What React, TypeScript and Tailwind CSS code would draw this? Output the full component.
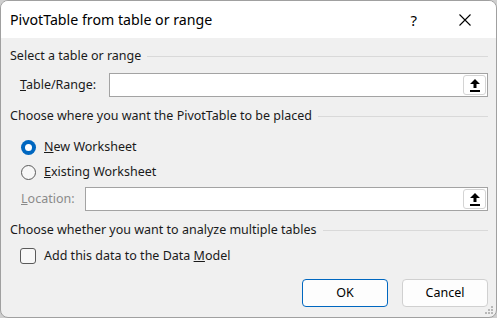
import React from 'react';

const UploadIcon = () => (
  <svg width="10" height="13" viewBox="0 0 10 13">
    <path d="M5 0 L10 5 L6.5 5 L6.5 9 L3.5 9 L3.5 5 L0 5 Z" fill="#000" />
    <rect x="0" y="11" width="10" height="2" fill="#000" />
  </svg>
);

const PickButton = () => (
  <div className="w-[23px] h-[20px] my-[1px] mr-[1px] bg-white border border-[#d4d4d4] rounded-[3px] flex items-center justify-center">
    <UploadIcon />
  </div>
);

const GroupHeader = ({ text }: { text: string }) => (
  <div className="flex items-center gap-[6px] pl-[9px] pr-[8px] h-[16px]">
    <span className="whitespace-nowrap">{text}</span>
    <div className="flex-1 h-px bg-[#d9d9d9]" />
  </div>
);

export default function App() {
  return (
    <div className="w-[497px] h-[318px] bg-[#cfcfcf] text-[12.5px] leading-[16px] text-[#1a1a1a]" style={{ fontFamily: '"Noto Sans", sans-serif' }}>
      <div className="relative w-[497px] h-[318px] rounded-[8px] border border-[#a0a0a0] bg-[#f0f0f0] overflow-hidden flex flex-col">
        {/* Title bar */}
        <div className="h-[37px] bg-white flex items-center shrink-0">
          <span className="pl-[9px] text-[14.2px] text-black">PivotTable from table or range</span>
          <span className="ml-auto mr-[42px] text-[15px] text-black">?</span>
          <svg className="mr-[25px]" width="12" height="12" viewBox="0 0 12 12">
            <path d="M0.5 0.5 L11.5 11.5 M11.5 0.5 L0.5 11.5" stroke="#000" strokeWidth="1.1" />
          </svg>
        </div>

        <div className="flex flex-col pt-[10px]">
          <GroupHeader text="Select a table or range" />
          <div className="flex items-center pl-[19px] pr-[8px] mt-[9px]">
            <span className="w-[89px]"><u>T</u>able/Range:</span>
            <div className="flex-1 h-[24px] bg-white border border-[#a3a3a3] flex justify-end">
              <PickButton />
            </div>
          </div>

          <div className="mt-[11px]">
            <GroupHeader text="Choose where you want the PivotTable to be placed" />
          </div>
          <div className="flex items-center pl-[20px] mt-[15px] h-[16px]">
            <div className="w-[15px] h-[15px] rounded-full bg-[#0067c0] flex items-center justify-center">
              <div className="w-[7px] h-[7px] rounded-full bg-white" />
            </div>
            <span className="ml-[8px]"><u>N</u>ew Worksheet</span>
          </div>
          <div className="flex items-center pl-[20px] mt-[9px] h-[16px]">
            <div className="w-[15px] h-[15px] rounded-full border border-[#5a5a5a] bg-[#f7f7f7]" />
            <span className="ml-[8px]"><u>E</u>xisting Worksheet</span>
          </div>
          <div className="flex items-center pl-[20px] pr-[8px] mt-[7px]">
            <span className="w-[64px] text-[#8a8a8a]"><u>L</u>ocation:</span>
            <div className="flex-1 h-[24px] bg-white border border-[#a3a3a3] flex justify-end">
              <PickButton />
            </div>
          </div>

          <div className="mt-[11px]">
            <GroupHeader text="Choose whether you want to analyze multiple tables" />
          </div>
          <div className="flex items-center pl-[19px] mt-[10px] h-[16px]">
            <div className="w-[16px] h-[16px] rounded-[3px] border border-[#5a5a5a] bg-[#f7f7f7]" />
            <span className="ml-[8px]">Add this data to the Data <u>M</u>odel</span>
          </div>

          <div className="flex justify-end gap-[14px] pr-[8px] mt-[15px]">
            <button className="w-[86px] h-[28px] rounded-[4px] border border-[#0067c0] bg-[#fdfdfd] text-[12.5px] text-black">OK</button>
            <button className="w-[86px] h-[28px] rounded-[4px] border border-[#d0d0d0] bg-[#fdfdfd] text-[12.5px] text-black">Cancel</button>
          </div>
        </div>

        {/* resize grip */}
        <svg className="absolute right-[2px] bottom-[2px]" width="9" height="9" viewBox="0 0 9 9">
          <rect x="6" y="0" width="2" height="2" fill="#b8b8b8" />
          <rect x="3" y="3" width="2" height="2" fill="#b8b8b8" />
          <rect x="6" y="3" width="2" height="2" fill="#b8b8b8" />
          <rect x="0" y="6" width="2" height="2" fill="#b8b8b8" />
          <rect x="3" y="6" width="2" height="2" fill="#b8b8b8" />
          <rect x="6" y="6" width="2" height="2" fill="#b8b8b8" />
        </svg>
      </div>
    </div>
  );
}
